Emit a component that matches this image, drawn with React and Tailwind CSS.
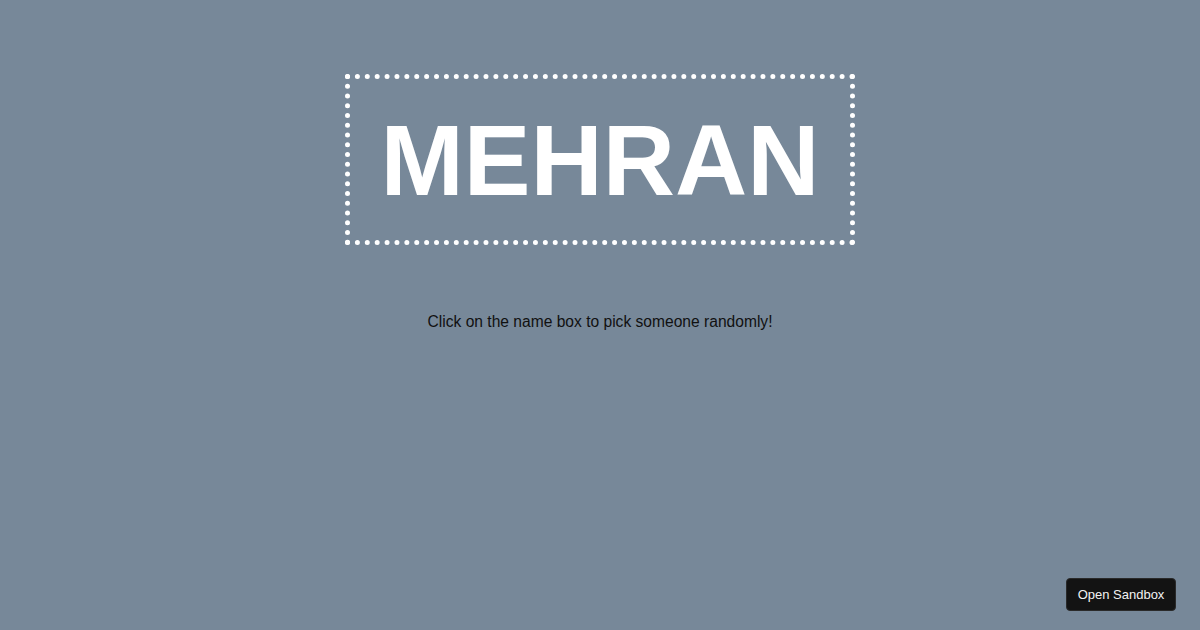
export default function App() {
  return (
    <div
      className="relative w-full h-[630px] bg-[#778899] flex flex-col items-center overflow-hidden"
      style={{ fontFamily: '"Liberation Sans", Arial, sans-serif' }}
    >
      <div className="mt-[74px] w-[510px] h-[171px] border-[5px] border-dotted border-white flex items-center justify-center cursor-pointer select-none">
        <h1 className="text-[100px] font-bold text-white leading-none">MEHRAN</h1>
      </div>
      <p className="mt-[68px] text-[15.6px] text-[#111] leading-[18px]">
        Click on the name box to pick someone randomly!
      </p>
      <button className="absolute right-[24px] bottom-[19px] w-[110px] h-[33px] rounded-[4px] bg-[#131313] text-[#f2f2f2] text-[13px] border border-[#2a2a2a]">
        Open Sandbox
      </button>
    </div>
  );
}
